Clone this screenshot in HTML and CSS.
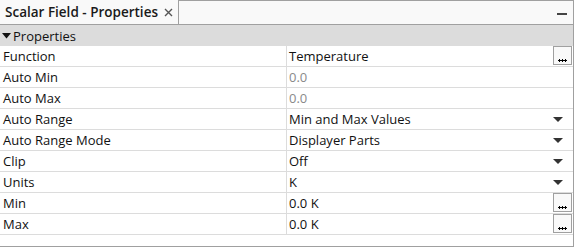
FILE: index.html
```html
<!DOCTYPE html>
<html>
<head>
<meta charset="utf-8">
<link rel="stylesheet" href="styles.css">
</head>
<body>
<div class="window">
  <div class="header">
    <div class="tab">
      <span class="tab-title">Scalar Field - Properties</span>
      <svg class="close" width="9" height="9" viewBox="0 0 9 9"><path d="M1 1L8 8M8 1L1 8" stroke="#555" stroke-width="1.4"/></svg>
    </div>
    <div class="header-rest">
      <span class="minimize"></span>
    </div>
  </div>
  <div class="group">
    <svg class="caret" width="9" height="6" viewBox="0 0 9 6"><path d="M0 0H9L4.5 5.5Z" fill="#111"/></svg>
    <span>Properties</span>
  </div>
  <div class="grid">
    <div class="row"><div class="label">Function</div><div class="value">Temperature<span class="btn"><svg width="9" height="4" viewBox="0 0 9 4"><path d="M0 2.5H9M1.5 1V4M4.5 1V4M7.5 1V4" stroke="#000" stroke-width="1"/></svg></span></div></div>
    <div class="row"><div class="label">Auto Min</div><div class="value disabled">0.0</div></div>
    <div class="row"><div class="label">Auto Max</div><div class="value disabled">0.0</div></div>
    <div class="row"><div class="label">Auto Range</div><div class="value">Min and Max Values<span class="arrow"></span></div></div>
    <div class="row"><div class="label">Auto Range Mode</div><div class="value">Displayer Parts<span class="arrow"></span></div></div>
    <div class="row"><div class="label">Clip</div><div class="value">Off<span class="arrow"></span></div></div>
    <div class="row"><div class="label">Units</div><div class="value">K<span class="arrow"></span></div></div>
    <div class="row"><div class="label">Min</div><div class="value">0.0 K<span class="btn"><svg width="9" height="4" viewBox="0 0 9 4"><path d="M0 2.5H9M1.5 1V4M4.5 1V4M7.5 1V4" stroke="#000" stroke-width="1"/></svg></span></div></div>
    <div class="row"><div class="label">Max</div><div class="value">0.0 K<span class="btn"><svg width="9" height="4" viewBox="0 0 9 4"><path d="M0 2.5H9M1.5 1V4M4.5 1V4M7.5 1V4" stroke="#000" stroke-width="1"/></svg></span></div></div>
  </div>
</div>
</body>
</html>
```
FILE: styles.css
```css
* { box-sizing: border-box; }
html, body { margin: 0; padding: 0; background: #fff; }
body { font-family: "Open Sans", "Noto Sans", sans-serif; font-size: 13px; color: #111; }
.window {
  width: 574px; height: 247px;
  border-right: 1px solid #a0a0a0;
  border-bottom: 1px solid #a0a0a0;
  background: #fff;
  display: flex; flex-direction: column;
}
.header {
  height: 25px; display: flex;
  border-bottom: 1px solid #a0a0a0;
  background: #f9f9f9;
}
.tab {
  width: 179px; display: flex; align-items: center;
  padding-left: 5px;
  border-right: 1px solid #a0a0a0;
  background: #f9f9f9;
}
.tab-title { font-weight: 600; font-size: 13.5px; color: #1a1a1a; }
.close { margin-left: 6px; margin-top: 1px; }
.header-rest {
  flex: 1; border-top: 1px solid #a0a0a0;
  display: flex; align-items: center; justify-content: flex-end;
  padding-right: 6px;
}
.minimize { width: 10px; height: 2px; background: #444; margin-top: 2px; }
.group {
  height: 21px; background: #dcdcdc;
  display: flex; align-items: center; padding-left: 2px;
  color: #111;
}
.caret { margin-right: 2px; margin-top: 1px; }
.grid { display: flex; flex-direction: column; }
.row {
  height: 21px; display: flex;
  border-bottom: 1px solid #dcdcdc;
}
.label {
  width: 287px; padding-left: 3px;
  border-right: 1px solid #dcdcdc;
  display: flex; align-items: center;
}
.value {
  flex: 1; display: flex; align-items: center;
  padding-left: 2px; position: relative;
}
.disabled { color: #8a8a8a; }
.arrow {
  position: absolute; right: 10px; top: 8px;
  width: 0; height: 0;
  border-left: 5px solid transparent; border-right: 5px solid transparent;
  border-top: 5px solid #333;
}
.btn {
  position: absolute; right: 1px; top: 0px;
  width: 19px; height: 19px;
  border: 1px solid #a0a0a0; background: #f9f9f9;
  display: flex; align-items: flex-end; justify-content: center;
  padding-bottom: 2px;
}
.btn svg { display: block; }
```
